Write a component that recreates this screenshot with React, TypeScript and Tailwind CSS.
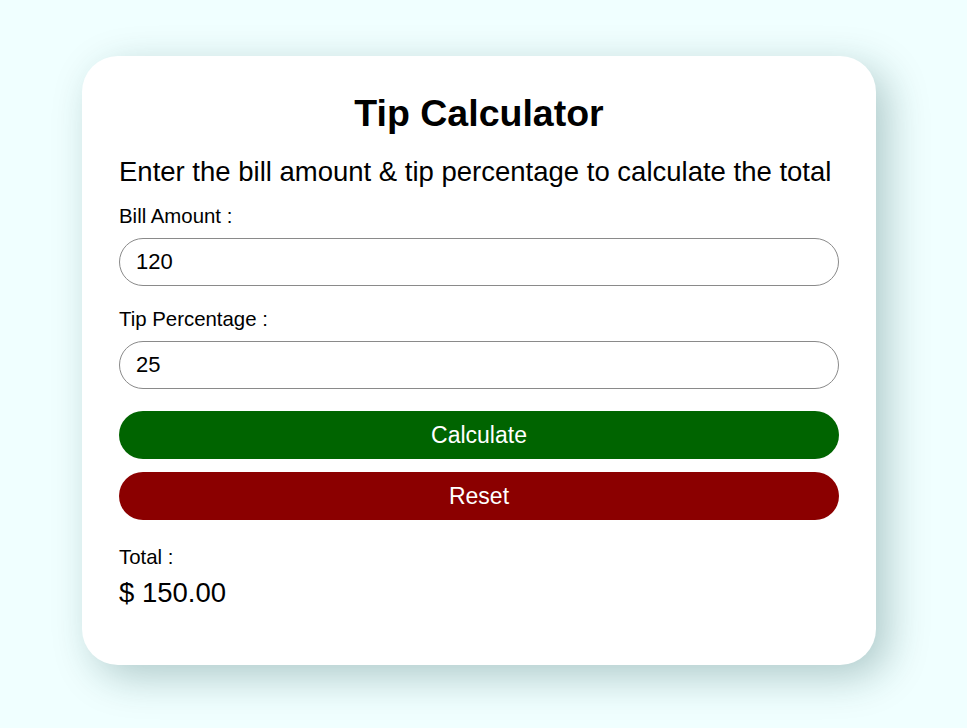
import React, { useState } from 'react';

export default function App() {
  const [bill, setBill] = useState('120');
  const [tip, setTip] = useState('25');
  const [total, setTotal] = useState('150.00');

  const calculate = () => {
    const b = parseFloat(bill) || 0;
    const t = parseFloat(tip) || 0;
    setTotal((b + (b * t) / 100).toFixed(2));
  };

  const reset = () => {
    setBill('');
    setTip('');
    setTotal('0.00');
  };

  return (
    <div className="min-h-screen bg-[#f0ffff] pt-[56px] pl-[82px] font-['Liberation_Sans',Arial,sans-serif] text-black">
      <div className="w-[794px] h-[609px] bg-white rounded-[36px] px-[37px] pt-[39px] shadow-[12px_12px_40px_rgba(0,60,60,0.27)] flex flex-col">
        <h1 className="text-[37.5px] font-bold leading-none text-center">Tip Calculator</h1>
        <p className="text-[27.5px] leading-none mt-[25px] whitespace-nowrap">
          Enter the bill amount &amp; tip percentage to calculate the total
        </p>

        <label className="text-[20.4px] leading-none mt-[21px]">Bill Amount :</label>
        <input
          value={bill}
          onChange={(e) => setBill(e.target.value)}
          className="mt-[12px] h-[48px] w-full rounded-full border border-[#8a8a8a] px-[16px] text-[22px] outline-none"
        />

        <label className="text-[20.4px] leading-none mt-[23px]">Tip Percentage :</label>
        <input
          value={tip}
          onChange={(e) => setTip(e.target.value)}
          className="mt-[11px] h-[48px] w-full rounded-full border border-[#8a8a8a] px-[16px] text-[22px] outline-none"
        />

        <button
          onClick={calculate}
          className="mt-[22px] h-[48px] w-full rounded-full bg-[#006400] text-white text-[23px]"
        >
          Calculate
        </button>
        <button
          onClick={reset}
          className="mt-[13px] h-[48px] w-full rounded-full bg-[#8b0000] text-white text-[23px]"
        >
          Reset
        </button>

        <div className="text-[20.4px] leading-none mt-[27px]">Total :</div>
        <div className="text-[27.5px] leading-none mt-[12px]">$ {total}</div>
      </div>
    </div>
  );
}
